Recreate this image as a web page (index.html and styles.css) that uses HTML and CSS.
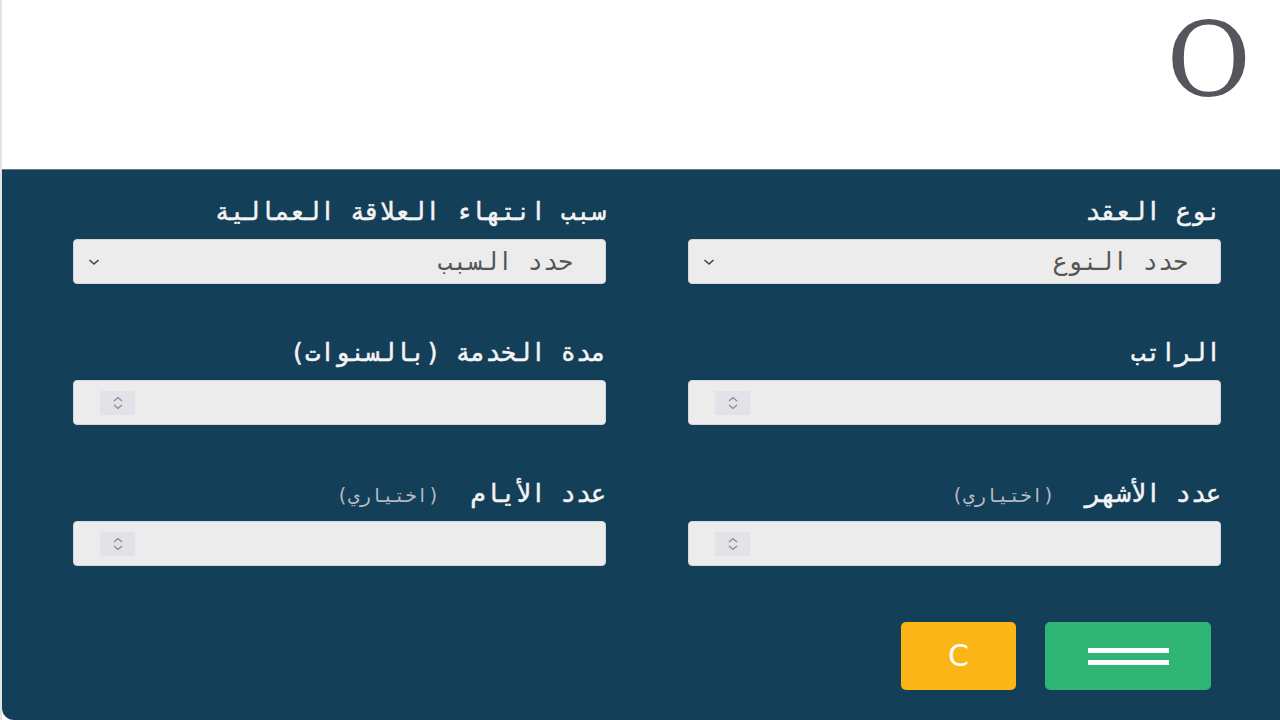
FILE: index.html
```html
<!DOCTYPE html>
<html lang="ar" dir="rtl">
<head>
    <meta charset="UTF-8">
    <meta name="viewport" content="width=device-width, initial-scale=1.0">
    <title>حاسبة مكافأة نهاية الخدمة</title>
    <link rel="stylesheet" href="styles.css">
</head>
<body>

<div class="calc">
    <div class="display">O</div>

    <div class="panel">
        <div class="fields">
            <div class="field">
                <label class="field-label">نوع العقد</label>
                <div class="box select-box">
                    <span class="box-text">حدد النوع</span>
                    <svg class="chevron" width="12" height="8" viewBox="0 0 12 8"><path d="M1.5 2 L6 6 L10.5 2" fill="none" stroke="#444" stroke-width="1.6"/></svg>
                </div>
            </div>

            <div class="field">
                <label class="field-label">سبب انتهاء العلاقة العمالية</label>
                <div class="box select-box">
                    <span class="box-text">حدد السبب</span>
                    <svg class="chevron" width="12" height="8" viewBox="0 0 12 8"><path d="M1.5 2 L6 6 L10.5 2" fill="none" stroke="#444" stroke-width="1.6"/></svg>
                </div>
            </div>

            <div class="field">
                <label class="field-label">الراتب</label>
                <div class="box number-box">
                    <span class="spin">
                        <svg width="14" height="18" viewBox="0 0 14 18"><path d="M3 7 L7 3.5 L11 7 M3 11 L7 14.5 L11 11" fill="none" stroke="#8a8a92" stroke-width="1.3"/></svg>
                    </span>
                </div>
            </div>

            <div class="field">
                <label class="field-label">مدة الخدمة (بالسنوات)</label>
                <div class="box number-box">
                    <span class="spin">
                        <svg width="14" height="18" viewBox="0 0 14 18"><path d="M3 7 L7 3.5 L11 7 M3 11 L7 14.5 L11 11" fill="none" stroke="#8a8a92" stroke-width="1.3"/></svg>
                    </span>
                </div>
            </div>

            <div class="field">
                <label class="field-label">عدد الأشهر <span class="optional">(اختياري)</span></label>
                <div class="box number-box">
                    <span class="spin">
                        <svg width="14" height="18" viewBox="0 0 14 18"><path d="M3 7 L7 3.5 L11 7 M3 11 L7 14.5 L11 11" fill="none" stroke="#8a8a92" stroke-width="1.3"/></svg>
                    </span>
                </div>
            </div>

            <div class="field">
                <label class="field-label">عدد الأيام <span class="optional">(اختياري)</span></label>
                <div class="box number-box">
                    <span class="spin">
                        <svg width="14" height="18" viewBox="0 0 14 18"><path d="M3 7 L7 3.5 L11 7 M3 11 L7 14.5 L11 11" fill="none" stroke="#8a8a92" stroke-width="1.3"/></svg>
                    </span>
                </div>
            </div>
        </div>

        <div class="actions">
            <button class="btn btn-equal"><span class="bar"></span><span class="bar"></span></button>
            <button class="btn btn-clear">C</button>
        </div>
    </div>
</div>

</body>
</html>
```

FILE: styles.css
```css
html, body {
    margin: 0;
    height: 100%;
    overflow: hidden;
}

body {
    background: #e4e4e4;
    font-family: "DejaVu Sans Mono", monospace;
}

.calc {
    margin-left: 2px;
    background: #fff;
    width: 1278px;
}

.display {
    height: 169px;
    box-sizing: border-box;
    padding: 0 29px 0 0;
    font-family: "DejaVu Serif", serif;
    font-size: 103px;
    line-height: 120px;
    color: #55565c;
    text-align: right;
    direction: ltr;
}

.panel {
    background: #143f58;
    border-top: 1px solid #5f7a8a;
    border-bottom-left-radius: 12px;
    height: 551px;
    box-sizing: border-box;
    padding: 27px 59px 0 71px;
}

.fields {
    display: grid;
    grid-template-columns: 533px 533px;
    column-gap: 82px;
    row-gap: 54px;
}

.field-label {
    display: block;
    height: 30px;
    line-height: 30px;
    margin-bottom: 12px;
    color: #f4f4f4;
    font-size: 25px;
    -webkit-text-stroke: 0.5px #f4f4f4;
    white-space: nowrap;
}

.optional {
    margin-right: 16px;
    font-size: 19px;
    color: #b4bcc4;
    -webkit-text-stroke: 0;
}

.box {
    height: 45px;
    box-sizing: border-box;
    background: #ececec;
    border: 1px solid #d6d6d6;
    border-radius: 4px;
    display: flex;
    align-items: center;
}

.select-box {
    justify-content: space-between;
    padding: 0 32px 0 14px;
}

.box-text {
    color: #555;
    font-size: 25px;
}

.chevron {
    display: block;
}

.number-box {
    justify-content: flex-end;
    padding-left: 26px;
}

.spin {
    width: 35px;
    height: 24px;
    background: #e2e2e8;
    display: flex;
    align-items: center;
    justify-content: center;
}

.actions {
    display: flex;
    gap: 29px;
    margin-top: 56px;
    padding-right: 10px;
}

.btn {
    height: 68px;
    border: none;
    border-radius: 5px;
    color: #fff;
    cursor: pointer;
}

.btn-equal {
    width: 166px;
    background: #2fb574;
    display: flex;
    flex-direction: column;
    align-items: center;
    justify-content: center;
    gap: 7px;
}

.bar {
    display: block;
    width: 81px;
    height: 5px;
    background: #fff;
}

.btn-clear {
    width: 115px;
    background: #fbb516;
    font-family: "DejaVu Sans", sans-serif;
    font-size: 30px;
    font-weight: normal;
    line-height: 1;
}
```
